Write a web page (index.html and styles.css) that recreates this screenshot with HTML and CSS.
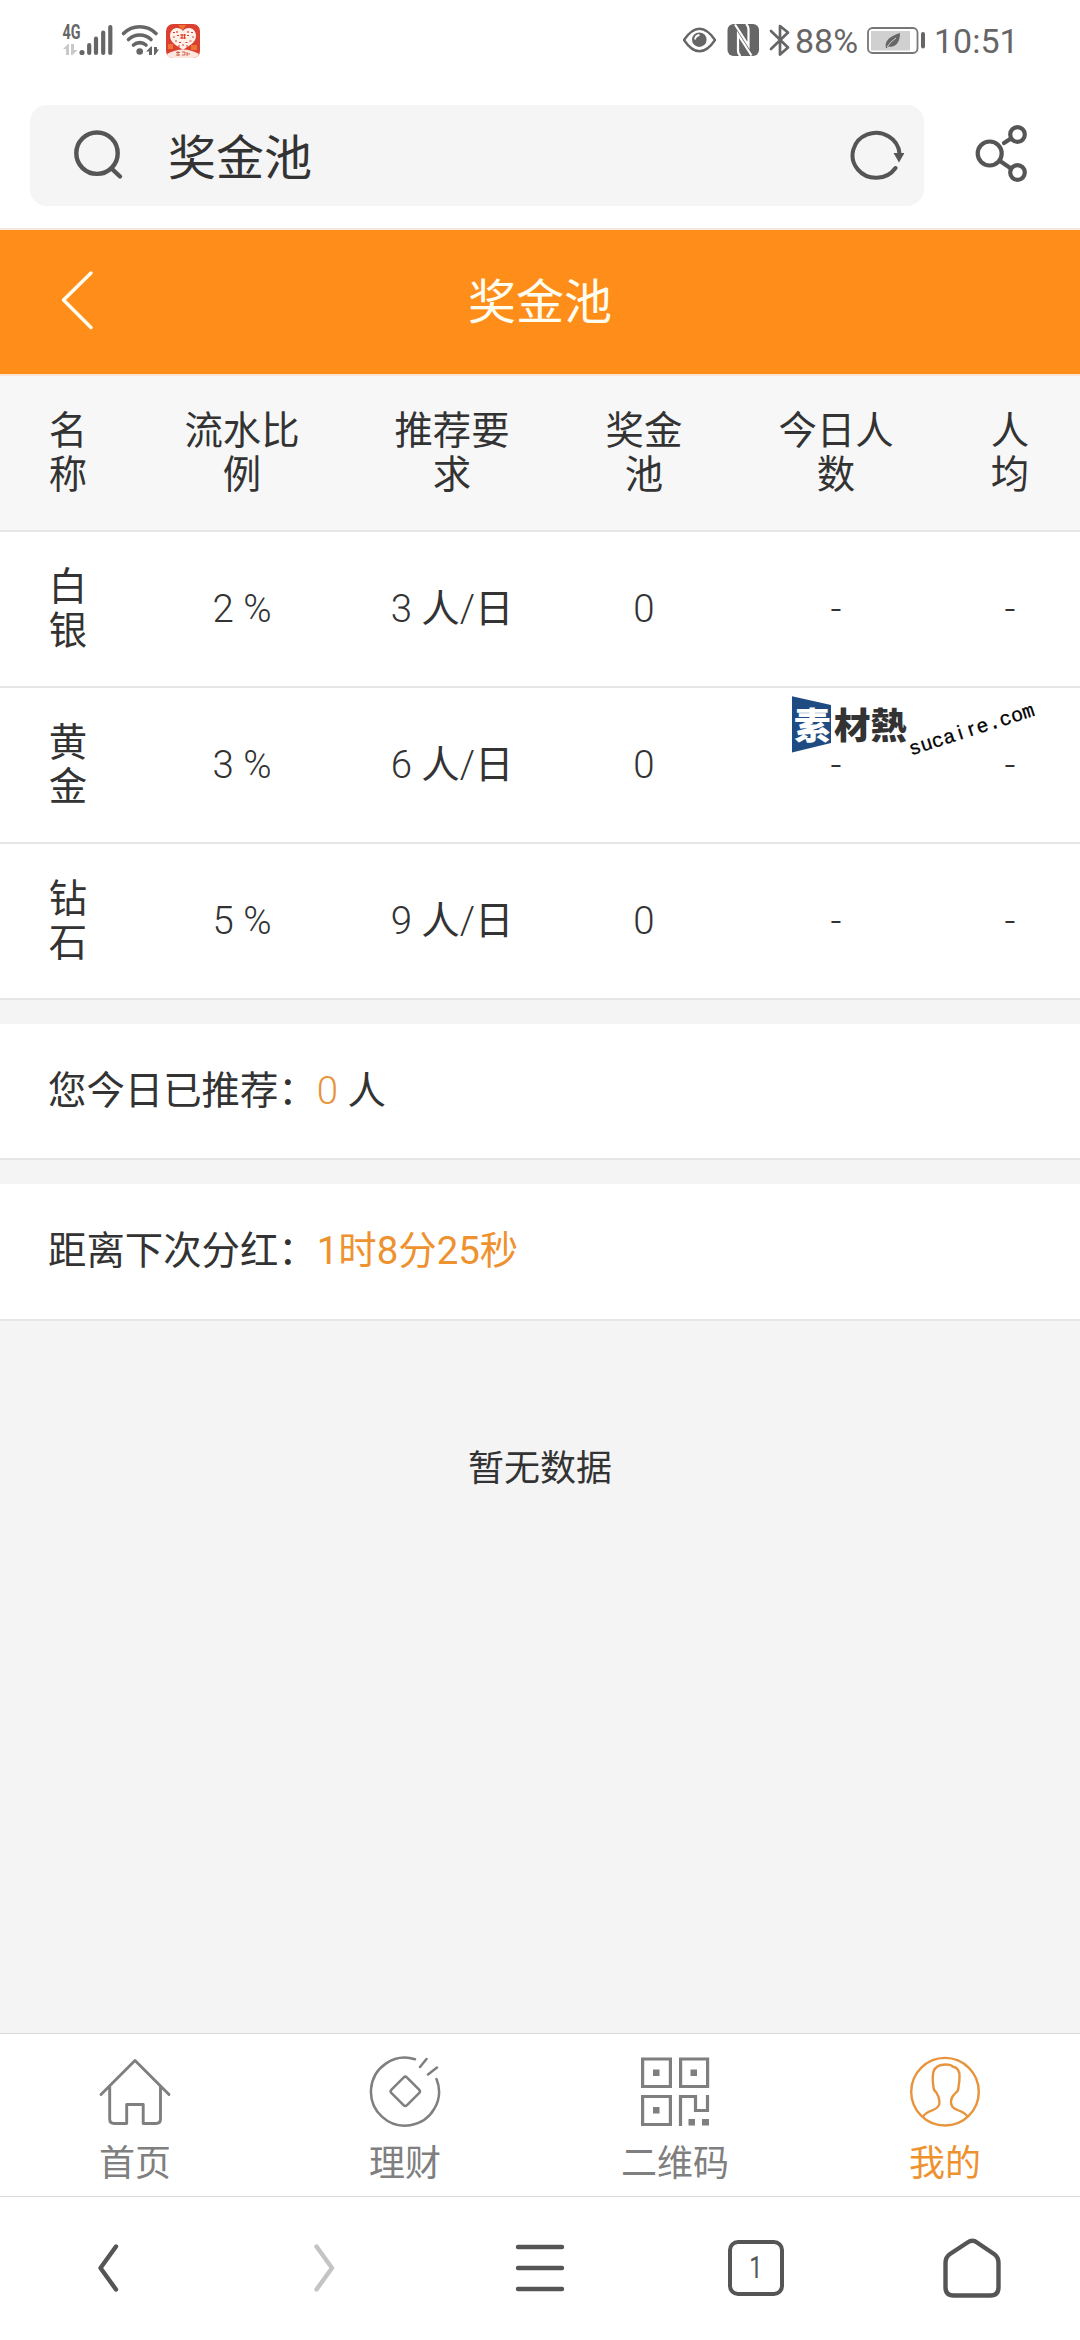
FILE: index.html
```html
<!DOCTYPE html>
<html lang="zh-CN">
<head>
<meta charset="utf-8">
<title>奖金池</title>
<link rel="stylesheet" href="styles.css">
</head>
<body>
<div class="screen">
  <div class="status">
    <svg class="status-left" width="140" height="40" viewBox="62 20 140 40" fill="#666">
      <text class="net" x="62.5" y="39" textLength="18" lengthAdjust="spacingAndGlyphs">4G</text>
      <g fill="#c9c9c9"><path d="M63 49l5-5h1v11h-3v-6zM71 44h3v6h3.500l-5 5H71z"/></g>
      <circle cx="82" cy="52.500" r="2.600"/>
      <g stroke="#666" stroke-width="4.200" stroke-linecap="round"><path d="M89.200 45v8M96 38.500V53M103.200 32.500V53M110.300 27V53"/></g>
      <g fill="none" stroke="#666" stroke-width="3.600" stroke-linecap="round"><path d="M123.500 33.500a23 23 0 0 1 32.500 0M128.500 39.500a16.500 16.500 0 0 1 22.500 0M133.500 45a9.500 9.500 0 0 1 12.500 0"/></g>
      <circle cx="139.700" cy="51.500" r="3.300"/>
      <path d="M146 51.500l5-5h1V55h-3v-3.500zM154 47v8h1l4-5.500h-2V47z"/>
      <rect x="166" y="24" width="34" height="34" rx="7" fill="#d9402f"/>
      <path d="M178 25h8l-3 5zM168 44h5v5h-5zM191 45h6v5h-6z" fill="#ee7434"/>
      <path d="M183 31c-3-5-13-4-13 5 0 7 8 10 13 14 5-4 13-7 13-14 0-9-10-10-13-5z" fill="#fff0ea"/>
      <path d="M173 32.500h2M177 31v2M188 31v2M191 32.500h2M173 37h2M177 35.500h2M187 35.500h2M192 37h2M180 35h6M180 38h6M182 34v5M184.500 34v5M175 41h2M179 42.500h2M185.500 42.500h2M189.500 41h2M178 46h2M182 45h2M186 46h2" stroke="#d9402f" stroke-width="1.200"/>
      <path d="M167 54q16-9 32 0-2 4-6 4h-20q-5 0-6-4z" fill="#fde6dd"/>
      <path d="M176 52.500h4M176 55h4M178 51v5M182 52h3v3h-3M187 52v4M187 54h3" stroke="#c96755" stroke-width="1" fill="none"/>
    </svg>
    <div class="status-right">
      <svg width="108" height="40" viewBox="683 20 108 40">
        <path d="M684 40q7.500-11.300 15.500-11.300T715 40q-7.500 11.300-15.500 11.300T684 40z" fill="none" stroke="#666" stroke-width="2.400" stroke-linejoin="round"/>
        <circle cx="699.300" cy="39.700" r="7.300" fill="#666"/>
        <path d="M695 39.500q.5-4 4.500-4.500" fill="none" stroke="#fff" stroke-width="1.800"/>
        <rect x="727.500" y="24" width="31.500" height="32" rx="6" fill="#666"/>
        <path d="M735 24.500l13.500 21V29.500q0-3.500-2.500-5.500M751.500 55.500l-13.500-21V50.500q0 3.500 2.500 5.500" fill="none" stroke="#fff" stroke-width="2.200"/>
        <path d="M771 31l17 16.500-8 7V26l8 6.500L771 49" fill="none" stroke="#666" stroke-width="2.700" stroke-linecap="round" stroke-linejoin="round"/>
      </svg>
      <span class="battery-text">88%</span>
      <svg class="battery" width="60" height="30" viewBox="866 26 60 30">
        <rect x="868" y="28" width="49.500" height="25" rx="4.500" fill="none" stroke="#777" stroke-width="1.800"/>
        <rect x="871" y="31" width="39" height="19.500" fill="#d0d0d0"/>
        <path d="M886 48c-2-7 4-12 14-15 0 9-4 15-12 13.500l-1 1.500z" fill="#666"/>
        <path d="M887 47q4-6 9-9" stroke="#d0d0d0" fill="none"/>
        <rect x="921" y="32" width="4" height="16.500" rx="2" fill="#666"/>
      </svg>
      <span class="clock">10:51</span>
    </div>
  </div>

  <div class="browser">
    <div class="search">
      <svg width="52" height="52" viewBox="72 129 52 52" fill="none" stroke="#555" stroke-width="4.400" stroke-linecap="round"><ellipse cx="97" cy="153.200" rx="20.700" ry="20.700"/><path d="M111.500 168.500l8.500 8"/></svg>
      <span class="search-text">奖金池</span>
      <svg width="56" height="52" viewBox="847 129 56 52" fill="none" stroke="#555" stroke-width="4" stroke-linecap="round"><path d="M898.500 153.500a23.500 22.500 0 1 0-4 14.500"/><path d="M892.500 153h11l-5.500 9.500z" fill="#555" stroke="none"/></svg>
    </div>
    <svg class="share" width="56" height="62" viewBox="972 123 56 62" fill="none" stroke="#555" stroke-width="4.200" stroke-linecap="round"><circle cx="988.700" cy="153.500" r="12"/><circle cx="1016.500" cy="134.500" r="7.300"/><circle cx="1016.500" cy="172.500" r="7.300"/><path d="M1010 138.500l-7 4.500M999 161l11 7.500"/></svg>
  </div>

  <header class="title-bar">
    <svg width="36" height="64" viewBox="60 270 36 64" fill="none" stroke="#fffdf0" stroke-width="3.500" stroke-linecap="round" stroke-linejoin="round"><path d="M91 273L63.500 300 91 327.500"/></svg>
    <h1>奖金池</h1>
  </header>

  <main class="content">
    <table class="pool">
      <colgroup><col class="c1"><col class="c2"><col class="c3"><col class="c4"><col class="c5"><col class="c6"></colgroup>
      <thead><tr><th>名称</th><th>流水比例</th><th>推荐要求</th><th>奖金池</th><th>今日人数</th><th>人均</th></tr></thead>
      <tbody>
        <tr><th>白银</th><td>2 %</td><td>3 <b>人</b>/<b>日</b></td><td>0</td><td>-</td><td>-</td></tr>
        <tr><th>黄金</th><td>3 %</td><td>6 <b>人</b>/<b>日</b></td><td>0</td><td>-</td><td>-</td></tr>
        <tr><th>钻石</th><td>5 %</td><td>9 <b>人</b>/<b>日</b></td><td>0</td><td>-</td><td>-</td></tr>
      </tbody>
    </table>
    <section class="notice"><p>您今日已推荐：<span class="count">0</span> 人</p></section>
    <section class="notice last"><p>距离下次分红：<span class="accent">1时8分25秒</span></p></section>
    <p class="empty">暂无数据</p>
  </main>

  <nav class="tabs">
    <a class="tab">
      <svg width="76" height="76" viewBox="97 2054 76 76" fill="none" stroke="#7f7f7f" stroke-width="2.900" stroke-linecap="round" stroke-linejoin="round"><path d="M101 2094.500l34-34 34 34M109.700 2087v32q0 4.500 4.500 4.500h12.500v-19h16.500v19H156q4.500 0 4.500-4.500v-32"/></svg>
      <span>首页</span>
    </a>
    <a class="tab">
      <svg width="76" height="76" viewBox="367 2054 76 76" fill="none" stroke="#7f7f7f" stroke-width="2.500" stroke-linecap="round" stroke-linejoin="round"><path d="M415 2059.200A34 34 0 1 0 436.500 2079M420 2067l6.500-8M428 2074.500l9-7"/><rect x="394.300" y="2080.300" width="22" height="22" rx="2.500" transform="rotate(45 405.300 2091.300)"/></svg>
      <span>理财</span>
    </a>
    <a class="tab">
      <svg width="76" height="76" viewBox="637 2054 76 76" fill="none" stroke="#7f7f7f" stroke-width="3.200"><path d="M642.600 2059h27.800v27.500h-27.800zM680.600 2059h27v27.500h-27zM642.600 2096.500h27.800v28h-27.800zM680.500 2126v-29.500H695.500v14h12V2095"/><path d="M653 2069.500h6.500v6.500H653zM690.500 2069.500h6.500v6.500h-6.500zM653 2107h6.500v6.500H653zM688.500 2119h6.500v6.500h-6.500zM702 2119h7v6.500h-7z" fill="#7f7f7f" stroke="none"/></svg>
      <span>二维码</span>
    </a>
    <a class="tab active">
      <svg width="76" height="76" viewBox="907 2054 76 76" fill="none" stroke="#e8943c" stroke-width="2.400" stroke-linecap="round" stroke-linejoin="round"><circle cx="945" cy="2091.700" r="33.800"/><path d="M923 2116.500c2-3.500 6-5 10-6.500 5-2 6.500-4 6.500-8 0-5-1.500-7-3.500-10q-2.500-1.500-2.500-5c-1-6-1-11 0-15.500 2-5.500 6-7 12-7 4 0 6 .5 7 2 5.500 1 7.500 4.500 7 11 0 4-.5 6-1 9.500q0 4-2.500 5.500c-3 3-5 5-5 9.500 0 4.500 2 6 6.500 8 4 1.500 8 3 10 6.500"/></svg>
      <span>我的</span>
    </a>
  </nav>

  <nav class="browser-nav">
    <svg width="60" height="60" viewBox="78 2238 60 60"><path d="M116 2246.500L100.500 2268l15.500 21.500"/></svg>
    <svg class="disabled" width="60" height="60" viewBox="294 2238 60 60"><path d="M316.500 2246.500L332 2268l-15.500 21.500"/></svg>
    <svg width="60" height="60" viewBox="510 2238 60 60"><path d="M518 2247h44M518 2268h44M518 2289h44"/></svg>
    <div class="windows"><span>1</span></div>
    <svg width="60" height="60" viewBox="942 2238 60 60"><path d="M945.500 2263q0-6 4.500-9l17.500-11.500q5-3.500 9.500 0L994 2254q4.500 3 4.500 9v24q0 8.500-8 8.500h-37q-8 0-8-8.500z"/></svg>
  </nav>

  <svg class="watermark" width="260" height="86" viewBox="788 682 260 86">
    <path d="M792 696.300L831 705v38l-39 9.500z" fill="#1e4b82"/>
    <text class="mark-cjk" x="794" y="738.500" fill="#fff">素</text>
    <text class="mark-cjk" x="834" y="738.500" fill="#333">材熱</text>
    <text class="mark-url" transform="translate(911 755.500) rotate(-17.800)"><tspan>suca</tspan><tspan class="plain" x="51.500">i</tspan><tspan class="plain" x="62">r</tspan><tspan x="71">e.com</tspan></text>
  </svg>
</div>
</body>
</html>
```

FILE: styles.css
```css
* { box-sizing: border-box; }
body {
  margin: 0;
  background: #fff;
  color: #333;
  font-family: Roboto, "Noto Sans CJK SC", sans-serif;
}
.screen {
  position: relative;
  display: flex;
  flex-direction: column;
  width: 1080px;
  height: 2340px;
  overflow: hidden;
}
svg { display: block; flex: none; }

.status {
  display: flex;
  justify-content: space-between;
  height: 80px;
  padding: 20px 63px 0 62px;
  color: #666;
  font-size: 34px;
  line-height: 42px;
}
.net { font: bold 21px Roboto, sans-serif; }
.status-right { display: flex; white-space: nowrap; }
.battery-text { margin-left: 4px; width: 64px; }
.battery { margin: 6px 8px 0 7px; }
.clock { width: 83px; }

.browser {
  display: flex;
  align-items: flex-start;
  height: 150px;
  padding: 25px 51px 0 30px;
  border-bottom: 2px solid #f5e9df;
}
.search {
  display: flex;
  align-items: flex-start;
  width: 894px;
  height: 101px;
  padding: 24px 20px 0 42px;
  border-radius: 17px;
  background: #f5f5f5;
}
.search-text {
  flex: 1;
  margin-left: 44px;
  font-size: 48px;
  line-height: 60px;
}
.share { margin: 18px 0 0 49px; }

.title-bar {
  display: grid;
  grid-template-columns: 1fr auto 1fr;
  align-items: center;
  height: 144px;
  padding: 0 60px;
  background: #ff8d1a;
  color: #fffdf0;
}
.title-bar h1 {
  margin: 0;
  padding-top: 2px;
  font-size: 48px;
  font-weight: 400;
  line-height: 64px;
}

.content {
  display: flex;
  flex: 1;
  flex-direction: column;
  gap: 24px;
  background: #f4f4f4;
}
.pool {
  width: 1080px;
  border-collapse: separate;
  border-spacing: 0;
  border-top: 2px solid #f9e5d1;
  table-layout: fixed;
  background: #fff;
  font-size: 38.4px;
  line-height: 44px;
}
.c1 { width: 136px; }
.c2 { width: 212px; }
.c3 { width: 208px; }
.c4 { width: 176px; }
.c5 { width: 208px; }
.c6 { width: 140px; }
.pool th, .pool td {
  height: 156px;
  padding: 0 43px;
  border-bottom: 2px solid #e6e6e6;
  text-align: center;
  vertical-align: middle;
  font-weight: 400;
}
.pool thead th { background: #f7f7f7; }
.pool td { padding: 0 0 1px; font-weight: 300; white-space: nowrap; }
.pool b { font-weight: 400; }

.notice {
  height: 136px;
  padding: 42px 48px 0;
  border-bottom: 2px solid #e6e6e6;
  background: #fff;
  font-size: 38.4px;
  line-height: 50px;
  white-space: pre;
}
.notice p { margin: 0; }
.last { height: 137px; }
.count { color: #e8943c; font-weight: 300; }
.accent { color: #ee9230; }
.empty {
  margin: 98px 0 0;
  text-align: center;
  font-size: 36px;
  line-height: 52px;
}

.tabs {
  display: grid;
  grid-template-columns: repeat(4, 1fr);
  height: 163px;
  border-top: 1px solid #d9d9d9;
  background: #fff;
  color: #7f7f7f;
}
.tab {
  display: flex;
  flex-direction: column;
  align-items: center;
  gap: 8px;
  padding-top: 20px;
  font-size: 36px;
  line-height: 52px;
}
.active { color: #ee9230; }

.browser-nav {
  display: grid;
  grid-template-columns: repeat(5, 1fr);
  place-items: center;
  height: 144px;
  padding-bottom: 2px;
  border-top: 1px solid #dcdcdc;
  background: #fff;
}
.browser-nav svg {
  fill: none;
  stroke: #555;
  stroke-width: 4.4px;
  stroke-linecap: round;
  stroke-linejoin: round;
}
.browser-nav .disabled { stroke: #c4c4c4; }
.windows {
  display: flex;
  align-items: center;
  justify-content: center;
  width: 56px;
  height: 56px;
  border: 4.5px solid #555;
  border-radius: 10px;
  color: #555;
  font-size: 31px;
}
.windows span { transform: scaleX(.75); }

.watermark { position: absolute; left: 788px; top: 682px; }
.mark-cjk { font: 900 36.5px "Noto Sans CJK TC", sans-serif; }
.mark-url { font: 20px "Liberation Mono", monospace; stroke: #000; stroke-width: .3px; }
.mark-url .plain { font-family: "Liberation Sans", sans-serif; }
```
